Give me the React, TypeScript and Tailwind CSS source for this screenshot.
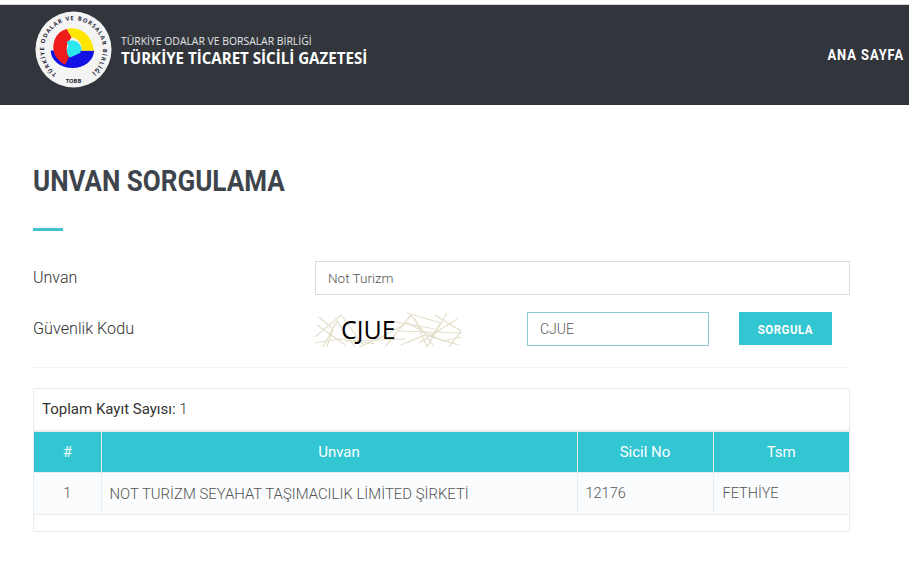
// App.tsx
// Unvan sorgulama sayfası

function TobbLogo() {
  return (
    <svg viewBox="0 0 80 80" className="h-[77px] w-[77px] shrink-0">
      <defs>
        <path id="ring-text" d="M 22.5 65 A 30.5 30.5 0 1 1 57.5 65" />
      </defs>
      <circle cx="40" cy="40" r="39.5" fill="#f4f4f4" />
      <text fontFamily="Open Sans, sans-serif" fontSize="6" fontWeight="700" fill="#1f2937">
        <textPath href="#ring-text" textLength="152" lengthAdjust="spacing">
          TÜRKİYE ODALAR VE BORSALAR BİRLİĞİ
        </textPath>
      </text>
      <text x="40" y="75" textAnchor="middle" fontFamily="Open Sans, sans-serif" fontSize="6" fontWeight="700" fill="#1f2937">
        TOBB
      </text>
      <g transform="scale(0.3467) translate(-105 -36)">
        <path d="M152 154 L282 154 A65 53 0 0 1 152 154 Z" fill="#1212e6" />
        <path d="M200 90 C175 95 158 120 160 150 C162 172 178 188 195 197 L208 172 C198 160 198 145 205 128 L215 115 Z" fill="#ef1c1c" />
        <path d="M200 90 C225 82 262 95 275 130 C279 140 281 150 281 155 L245 155 C247 135 235 118 215 115 Z" fill="#ffe600" />
        <path d="M200 128 C215 120 240 125 245 150 L240 162 L210 175 C200 170 198 150 205 140 Z" fill="#2be7ee" />
      </g>
    </svg>
  );
}

function CaptchaImage() {
  const lines = [
    'M0 26 L26 4 L48 34',
    'M8 36 L22 10 L40 36',
    'M2 14 L30 34',
    'M0 32 L24 28 L60 33',
    'M4 6 L18 18 L12 36',
    'M60 30 L92 12 L128 30 L146 26',
    'M70 36 L96 4 L118 34',
    'M100 8 L112 36 L132 2',
    'M120 4 L146 20 L134 36',
    'M84 20 L147 22',
    'M104 32 L142 8',
    'M30 30 L90 28',
    'M76 10 L120 18',
    'M86 34 L110 24 L144 34',
    'M92 2 L126 12 L116 26',
    'M44 36 L70 24',
  ];
  return (
    <div className="relative h-[36px] w-[147px] shrink-0">
      <svg viewBox="0 0 147 36" className="h-full w-full">
        {lines.map((d) => (
          <path key={d} d={d} fill="none" stroke="#e3dfca" strokeWidth="1.2" />
        ))}
      </svg>
      <span className="absolute left-[26px] top-[3px] text-[25px] font-normal leading-[30px] text-black [font-family:'Open_Sans',sans-serif]">
        CJUE
      </span>
    </div>
  );
}

export default function App() {
  return (
    <div className="min-h-[565px] bg-white font-light text-[#333] [font-family:Roboto,sans-serif]">
      {/* Header */}
      <header className="mt-[4px] flex h-[101px] items-start justify-between border-t border-[#d4d4d4] bg-[#32363c] pl-[35px] pr-[5px] pt-[6px]">
        <div className="flex items-center gap-[9px]">
          <TobbLogo />
          <div className="pt-[3px] font-normal text-white [font-family:'Open_Sans',sans-serif]">
            <div className="text-[10.4px] leading-[13px] text-[#e4e6e8]">TÜRKİYE ODALAR VE BORSALAR BİRLİĞİ</div>
            <div className="mt-[1px] text-[15.1px] font-bold leading-[19px]">TÜRKİYE TİCARET SİCİLİ GAZETESİ</div>
          </div>
        </div>
        <a className="mt-[34px] origin-right scale-x-[0.86] text-[15px] font-bold leading-[20px] tracking-[1.1px] text-white">ANA SAYFA</a>
      </header>

      <main className="w-[850px] pl-[33px] pt-[57px]">
        <h1 className="origin-left scale-x-[0.897] text-[29px] font-bold leading-[38px] text-[#3e444c]">UNVAN SORGULAMA</h1>
        <div className="mt-[28px] h-[3px] w-[30px] bg-[#44c0ce]" />

        <form className="mt-[30px]">
          <div className="flex h-[34px] items-center">
            <label className="w-[282px] text-[16px]">Unvan</label>
            <input
              readOnly
              value="Not Turizm"
              className="h-full w-[535px] border border-[#d8dbdd] px-[12px] text-[13.5px] text-[#555] outline-none"
            />
          </div>

          <div className="mt-[16px] flex h-[36px] items-center">
            <label className="w-[282px] text-[16.2px]">Güvenlik Kodu</label>
            <CaptchaImage />
            <input
              readOnly
              value="CJUE"
              className="ml-[65px] h-[34px] w-[182px] border border-[#8ec8d6] px-[12px] text-[14px] text-[#555] outline-none"
            />
            <button type="button" className="mb-[1px] ml-[30px] h-[33px] w-[93px] bg-[#32c5d2] font-bold text-white">
              <span className="inline-block scale-x-[0.88] text-[13px] tracking-[0.6px]">SORGULA</span>
            </button>
          </div>
        </form>

        <div className="mt-[20px] border-t border-[#eef1f5]" />

        {/* Sonuç */}
        <section className="mt-[20px] h-[144px] border border-[#e7ecf1]">
          <div className="flex h-[41px] items-center pl-[8px] text-[15px] font-normal text-[#333]">
            <span>
              Toplam Kayıt Sayısı: <span className="font-light">1</span>
            </span>
          </div>
          <table className="w-full table-fixed border-collapse border-t-2 border-[#e7ecf1] text-[14.5px]">
            <colgroup>
              <col className="w-[67px]" />
              <col className="w-[476px]" />
              <col className="w-[136px]" />
              <col />
            </colgroup>
            <thead>
              <tr className="h-[41px] bg-[#32c5d2] text-[15px] text-white">
                <th className="border-r border-[#e7ecf1] pt-[1px] font-normal">#</th>
                <th className="border-r border-[#e7ecf1] pt-[1px] font-normal">Unvan</th>
                <th className="border-r border-[#e7ecf1] pt-[1px] font-normal">Sicil No</th>
                <th className="pt-[1px] font-normal">Tsm</th>
              </tr>
            </thead>
            <tbody>
              <tr className="h-[42px] border-y border-[#e7ecf1] bg-[#fbfcfd] text-[#555]">
                <td className="border-r border-[#e7ecf1] pt-[2px] text-center">1</td>
                <td className="whitespace-nowrap border-r border-[#e7ecf1] pl-[8px] pt-[2px] text-[14.9px]">NOT TURİZM SEYAHAT TAŞIMACILIK LİMİTED ŞİRKETİ</td>
                <td className="border-r border-[#e7ecf1] pl-[8px] pt-[2px]">12176</td>
                <td className="pl-[9px] pt-[2px]">FETHİYE</td>
              </tr>
            </tbody>
          </table>
        </section>
      </main>
    </div>
  );
}
